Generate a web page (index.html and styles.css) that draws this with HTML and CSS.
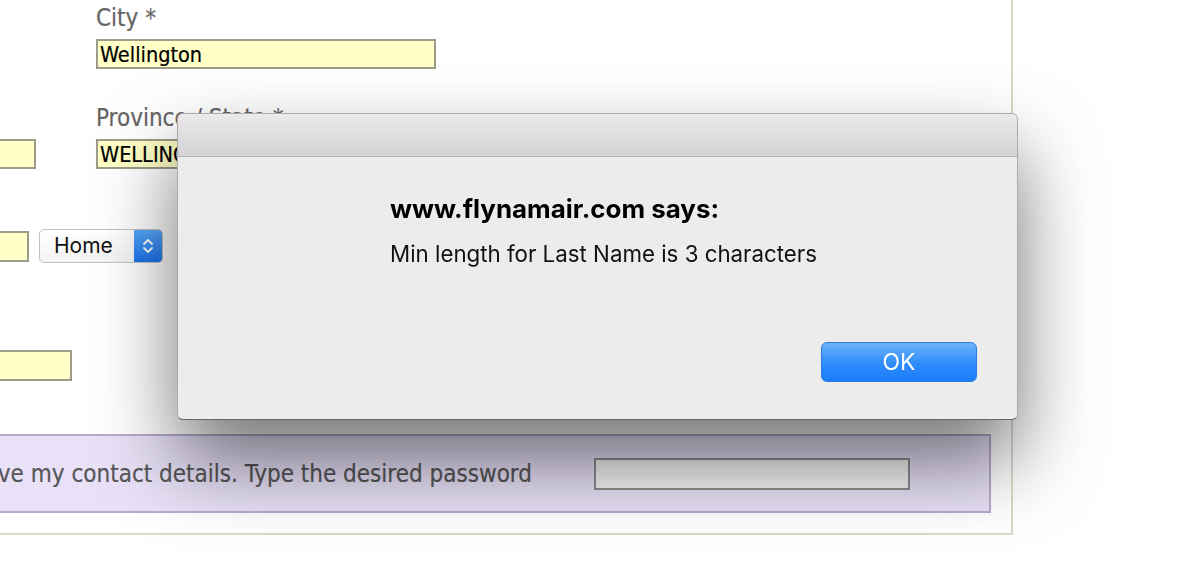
FILE: index.html
```html
<!DOCTYPE html>
<html lang="en">
<head>
<meta charset="utf-8">
<title>Contact details</title>
<link rel="stylesheet" href="styles.css">
</head>
<body>
<div class="page">
  <div class="row row-1">
    <div class="cell-left"></div>
    <div class="field">
      <label class="lbl">City *</label>
      <input class="txt txt-wide" type="text" value="Wellington" readonly>
    </div>
  </div>
  <div class="row row-2">
    <div class="cell-left">
      <input class="txt txt-l2" type="text" value="" readonly>
    </div>
    <div class="field">
      <label class="lbl">Province / State *</label>
      <input class="txt txt-wide" type="text" value="WELLINGTON" readonly>
    </div>
  </div>
  <div class="row row-3">
    <input class="txt txt-l3" type="text" value="" readonly>
    <div class="select">
      <span class="select-text">Home</span>
      <span class="select-btn">
        <svg width="14" height="20" viewBox="0 0 14 20" fill="none" stroke="#fff" stroke-width="1.8" stroke-linecap="round" stroke-linejoin="round"><path d="M3 8 L7 4 L11 8"/><path d="M3 12 L7 16 L11 12"/></svg>
      </span>
    </div>
  </div>
  <div class="row row-4">
    <input class="txt txt-l4" type="text" value="" readonly>
  </div>
  <div class="save-box">
    <span class="save-text">Please save my contact details. Type the desired password</span>
    <input class="pwd" type="password" value="" readonly>
  </div>
</div>

<div class="alert">
  <div class="alert-title"></div>
  <div class="alert-body">
    <div class="alert-head">www.flynamair.com says:</div>
    <div class="alert-msg">Min length for Last Name is 3 characters</div>
    <div class="alert-actions">
      <button class="ok-btn" type="button">OK</button>
    </div>
  </div>
</div>
</body>
</html>
```

FILE: styles.css
```css
html, body {
  margin: 0;
  padding: 0;
  background: #ffffff;
  overflow: hidden;
}

body {
  width: 1190px;
  height: 578px;
  font-family: "DejaVu Sans Condensed", "DejaVu Sans", sans-serif;
  font-stretch: condensed;
}

.page {
  box-sizing: border-box;
  width: 1313px;
  margin-left: -300px;
  padding: 0 20px 20px 0;
  border-right: 2px solid #ddd7cd;
  border-bottom: 2px solid #ddd7cd;
  background: #ffffff;
  display: flex;
  flex-direction: column;
}

.row {
  display: flex;
  align-items: flex-end;
}

.row-1 { margin-top: 4px; }
.row-2 { margin-top: 35px; }
.row-3 { margin-top: 60px; align-items: center; }
.row-4 { margin-top: 87px; }

.cell-left {
  width: 396px;
  flex: none;
  display: flex;
}

.field {
  display: flex;
  flex-direction: column;
}

.lbl {
  display: block;
  font-size: 24px;
  line-height: 28px;
  color: #656565;
  height: 28px;
  white-space: nowrap;
  -webkit-text-stroke: 0.2px #656565;
}

.txt {
  box-sizing: border-box;
  height: 30px;
  margin: 0;
  padding: 0 2px;
  border: 2px solid #9c9c8a;
  background: #ffffc6;
  color: #000;
  font-family: "DejaVu Sans Condensed", "DejaVu Sans", sans-serif;
  font-stretch: condensed;
  font-size: 21.5px;
  outline: none;
  border-radius: 0;
  -webkit-text-stroke: 0.2px #000;
}

.txt-wide {
  width: 340px;
  margin-top: 7px;
}

.txt-l2 {
  width: 136px;
  margin-left: 200px;
}

.txt-l3 {
  width: 129px;
  height: 31px;
  margin-left: 200px;
}

.txt-l4 {
  width: 172px;
  height: 31px;
  margin-left: 200px;
}

.select {
  box-sizing: border-box;
  margin-left: 10px;
  width: 124px;
  height: 34px;
  display: flex;
  border: 1px solid #c3c3c3;
  border-radius: 5px;
  background: linear-gradient(#ffffff, #f3f3f3);
  overflow: hidden;
}

.select-text {
  flex: 1;
  padding-left: 14px;
  font-family: "Inter", "Liberation Sans", sans-serif;
  font-size: 21px;
  line-height: 32px;
  color: #111;
}

.select-btn {
  width: 28px;
  display: flex;
  align-items: center;
  justify-content: center;
  background: linear-gradient(#5aa9fb, #1b74ee);
}

.save-box {
  box-sizing: border-box;
  height: 79px;
  margin-top: 53px;
  padding-right: 79px;
  border: 2px solid #b6abcb;
  background: #e8e1f7;
  display: flex;
  align-items: center;
}

.save-text {
  flex: 1;
  text-align: right;
  white-space: nowrap;
  font-size: 24px;
  color: #575757;
  -webkit-text-stroke: 0.2px #575757;
}

.pwd {
  box-sizing: border-box;
  width: 316px;
  height: 32px;
  margin: 0 0 0 62px;
  padding: 0;
  border: 2px solid #8e8e8e;
  background: #f6f6f6;
  border-radius: 0;
  outline: none;
}

/* Browser alert dialog overlay */
.alert {
  position: fixed;
  left: 177px;
  top: 113px;
  box-sizing: border-box;
  width: 841px;
  height: 307px;
  border: 1px solid rgba(0, 0, 0, 0.28);
  border-bottom-color: rgba(0, 0, 0, 0.55);
  border-radius: 6px;
  background: #ececec;
  box-shadow: 0 40px 80px rgba(0, 0, 0, 0.55);
  overflow: hidden;
  display: flex;
  flex-direction: column;
  font-family: "Inter", "Liberation Sans", sans-serif;
}

.alert-title {
  height: 42px;
  flex: none;
  border-bottom: 1px solid #b3b3b3;
  background: linear-gradient(#ebe9eb, #d4d2d4);
}

.alert-body {
  flex: 1;
  padding: 37px 40px 37px 212px;
  display: flex;
  flex-direction: column;
}

.alert-head {
  font-size: 25.9px;
  font-weight: 700;
  line-height: 30px;
  color: #000;
  white-space: nowrap;
}

.alert-msg {
  margin-top: 17px;
  font-size: 22.3px;
  line-height: 26px;
  color: #111;
  white-space: nowrap;
}

.alert-actions {
  margin-top: auto;
  display: flex;
  justify-content: flex-end;
}

.ok-btn {
  width: 156px;
  height: 40px;
  border: 1px solid #2a7be0;
  border-radius: 6px;
  background: linear-gradient(#6db4fb, #2e8cfb 55%, #1a7cf9);
  color: #ffffff;
  font-family: "Inter", "Liberation Sans", sans-serif;
  font-size: 23px;
  font-weight: 400;
  padding: 0;
}
```
